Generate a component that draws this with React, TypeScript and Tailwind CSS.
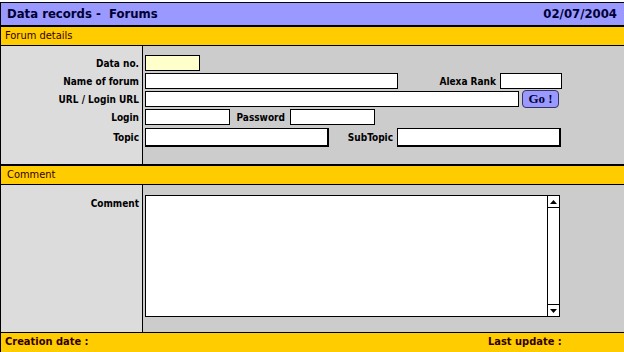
import React from "react";

const font = { fontFamily: '"DejaVu Sans Condensed", "DejaVu Sans", sans-serif' };

function Label({ children }: { children: React.ReactNode }) {
  return (
    <div className="h-[18px] flex items-center justify-end pr-[3px] text-[10px] font-bold text-black">
      {children}
    </div>
  );
}

function Input({ w, bg = "bg-white", thick = false }: { w: string; bg?: string; thick?: boolean }) {
  return (
    <div
      className={`${w} ${bg} ${thick ? "h-[19px] border border-black border-r-2 border-b-2" : "h-[16px] border border-black"} shrink-0`}
    />
  );
}

export default function App() {
  return (
    <div className="w-[624px] h-[352px] bg-white overflow-hidden pt-[2px]" style={font}>
      <div className="border-l border-black h-[350px] flex flex-col">
        {/* header */}
        <div className="h-[25px] bg-[#9999ff] border-t border-b-2 border-black flex items-center justify-between pl-[6px] pr-[7px] text-[13px] font-bold text-[#000033]">
          <span>Data records -&nbsp; Forums</span>
          <span>02/07/2004</span>
        </div>
        {/* forum details bar */}
        <div className="h-[19px] bg-[#ffcc00] border-b border-black flex items-center pl-[4px] text-[11px] text-[#330000]">
          Forum details
        </div>
        {/* section 1 */}
        <div className="flex h-[119px] border-b border-black">
          <div className="w-[142px] bg-[#dcdcdc] border-r border-black pt-[8px]">
            <Label>Data no.</Label>
            <Label>Name of forum</Label>
            <Label>URL / Login URL</Label>
            <Label>Login</Label>
            <div className="h-[22px] flex items-center justify-end pr-[3px] text-[10px] font-bold text-black">Topic</div>
          </div>
          <div className="flex-1 bg-[#cccccc] pt-[8px] pl-[2px]">
            <div className="h-[18px] flex items-center">
              <Input w="w-[55px]" bg="bg-[#ffffcc]" />
            </div>
            <div className="h-[18px] flex items-center">
              <Input w="w-[253px]" />
              <div className="w-[102px] text-right pr-[4px] text-[10px] font-bold">Alexa Rank</div>
              <Input w="w-[62px]" />
            </div>
            <div className="h-[18px] flex items-center">
              <Input w="w-[374px]" />
              <div
                className="ml-[3px] w-[37px] h-[18px] rounded-[4px] border border-[#333366] bg-[#9999ff] flex items-center justify-center text-[13px] font-bold text-[#000033]"
                style={{ fontFamily: '"Liberation Serif", serif' }}
              >
                Go !
              </div>
            </div>
            <div className="h-[18px] flex items-center">
              <Input w="w-[85px]" />
              <div className="w-[60px] text-right pr-[5px] text-[10px] font-bold">Password</div>
              <Input w="w-[85px]" />
            </div>
            <div className="h-[22px] flex items-center">
              <Input w="w-[184px]" thick />
              <div className="w-[68px] text-right pr-[4px] text-[10px] font-bold">SubTopic</div>
              <Input w="w-[164px]" thick />
            </div>
          </div>
        </div>
        {/* comment bar */}
        <div className="h-[20px] bg-[#ffcc00] border-t border-b border-black flex items-center pl-[6px] text-[11px] text-[#330000]">
          Comment
        </div>
        {/* section 2 */}
        <div className="flex h-[148px] border-b border-black">
          <div className="w-[142px] bg-[#dcdcdc] border-r border-black pt-[9px]">
            <Label>Comment</Label>
          </div>
          <div className="flex-1 bg-[#cccccc] pt-[10px] pl-[2px]">
            <div className="w-[415px] h-[122px] bg-white border border-black flex justify-end">
              <div className="w-[12px] h-full border-l border-black flex flex-col">
                <div className="h-[12px] border-b border-black flex items-center justify-center">
                  <svg width="7" height="4" viewBox="0 0 7 4"><path d="M3.5 0L7 4H0z" fill="black" /></svg>
                </div>
                <div className="flex-1" />
                <div className="h-[12px] border-t border-black flex items-center justify-center">
                  <svg width="7" height="4" viewBox="0 0 7 4"><path d="M0 0H7L3.5 4z" fill="black" /></svg>
                </div>
              </div>
            </div>
          </div>
        </div>
        {/* footer */}
        <div className="flex-1 bg-[#ffcc00] flex items-center text-[11px] font-bold text-[#330000]">
          <div className="w-[487px] pl-[4px]">Creation date :</div>
          <div>Last update :</div>
        </div>
      </div>
    </div>
  );
}
